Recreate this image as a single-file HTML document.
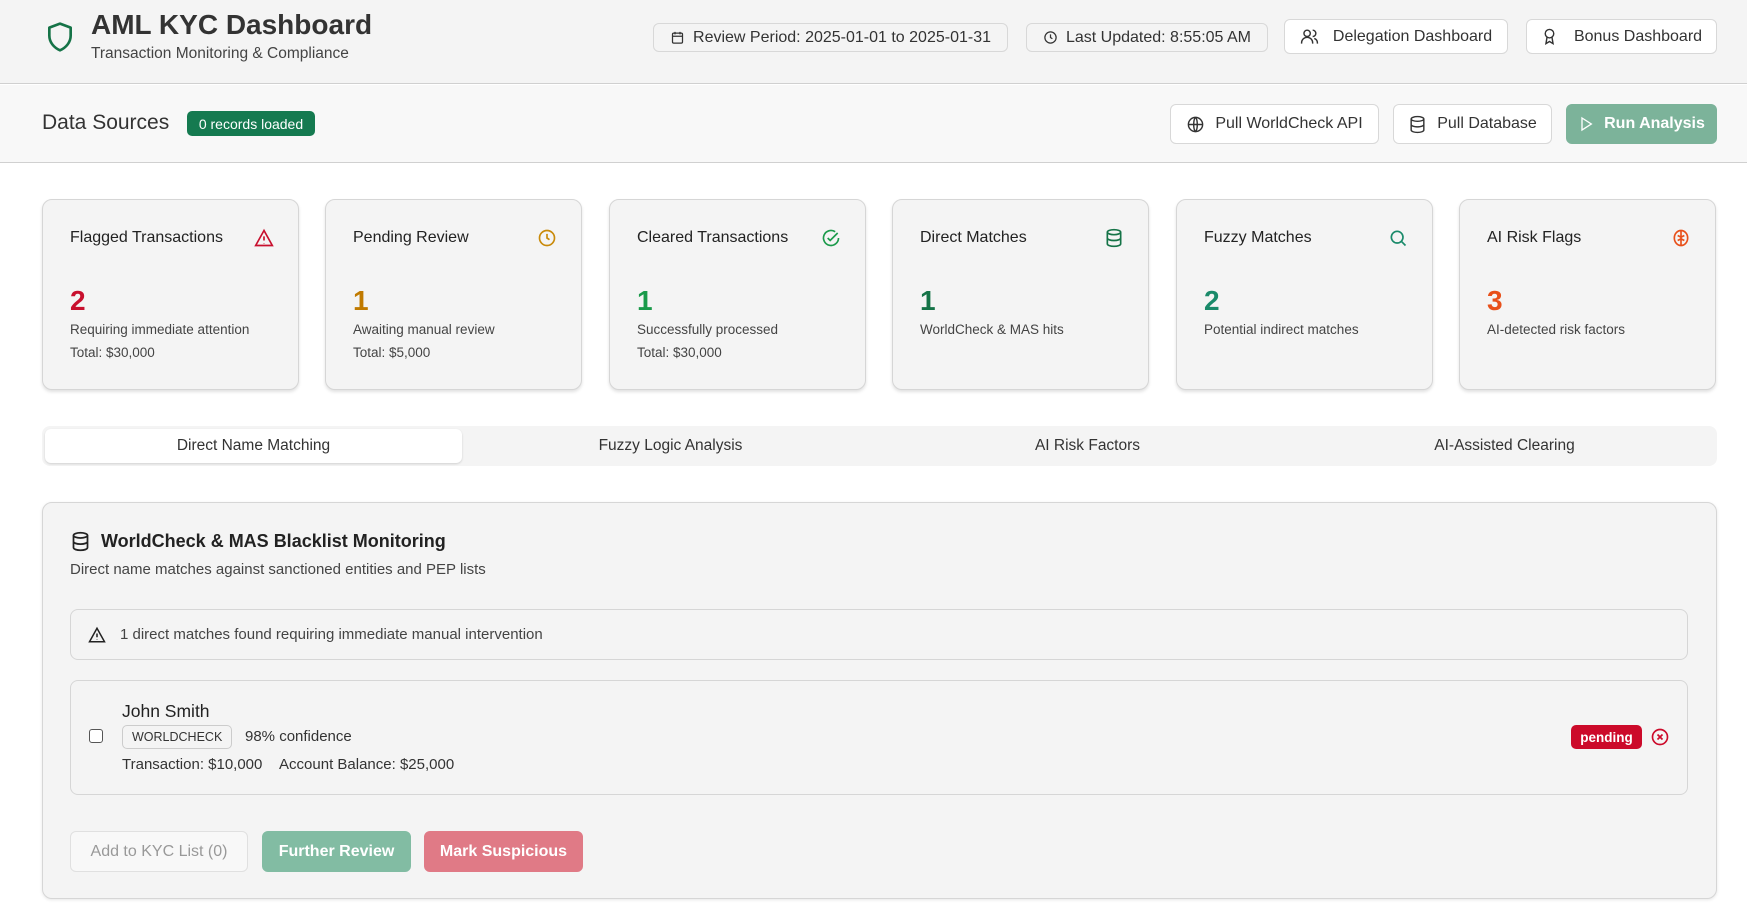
<!DOCTYPE html><html><head><style>
*{box-sizing:border-box;margin:0;padding:0}
body{width:1747px;height:916px;overflow:hidden;background:#fff;font-family:"Liberation Sans",sans-serif;color:#222;position:relative}
.a{position:absolute}
.btn{position:absolute;border:1px solid #d8d8d8;border-radius:6px;background:#fff;display:flex;align-items:center;justify-content:center;gap:10px;font-size:16px;color:#333}
.card{position:absolute;top:199px;width:257px;height:191px;background:#f4f4f4;border:1px solid #d6d6d6;border-radius:10px;box-shadow:0 2px 3px rgba(0,0,0,.12)}
.card .t{position:absolute;left:27px;top:29px;font-size:16px;color:#222}
.card .i{position:absolute;right:24px;top:28px}
.card .n{position:absolute;left:27px;top:85px;font-size:28px;font-weight:bold}
.card .s{position:absolute;left:27px;top:122px;font-size:13.5px;color:#444}
.card .s2{position:absolute;left:27px;top:145px;font-size:13.5px;color:#444}
svg{display:block}
</style></head><body>
<div class="a" style="left:0;top:0;width:1747px;height:84px;background:#f4f4f4;border-bottom:1px solid #d0d0d0"></div>
<svg class="a" style="left:44px;top:19px" width="32" height="36" viewBox="0 0 24 24" fill="none" stroke="#157347" stroke-width="2" stroke-linejoin="round"><path d="M12 2 4 5v6c0 5 3.5 9 8 11 4.5-2 8-6 8-11V5z"/></svg>
<div class="a" style="left:91px;top:9px;font-size:28px;font-weight:bold;color:#333">AML KYC Dashboard</div>
<div class="a" style="left:91px;top:45px;font-size:15.5px;color:#444">Transaction Monitoring &amp; Compliance</div>
<div class="btn" style="left:653px;top:23px;width:355px;height:29px;background:#f4f4f4;font-size:16px;gap:8px"><svg width="15" height="15" viewBox="0 0 24 24" fill="none" stroke="#333" stroke-width="2"><rect x="4" y="5" width="16" height="16" rx="2"/><path d="M8 3v4M16 3v4M4 10h16"/></svg>Review Period: 2025-01-01 to 2025-01-31</div>
<div class="btn" style="left:1026px;top:23px;width:242px;height:29px;background:#f4f4f4;gap:8px"><svg width="15" height="15" viewBox="0 0 24 24" fill="none" stroke="#333" stroke-width="2"><circle cx="12" cy="12" r="9"/><path d="M12 7v5l3 2"/></svg>Last Updated: 8:55:05 AM</div>
<div class="btn" style="left:1284px;top:19px;width:224px;height:35px;gap:14px"><svg width="19" height="19" viewBox="0 0 24 24" fill="none" stroke="#333" stroke-width="1.8"><circle cx="9" cy="8" r="4"/><path d="M2 21v-1a7 7 0 0 1 14 0v1M16 4a4 4 0 0 1 0 8M22 21v-1a6 6 0 0 0-4-5.5"/></svg>Delegation Dashboard</div>
<div class="btn" style="left:1526px;top:19px;width:191px;height:35px;gap:16px"><svg width="17" height="19" viewBox="0 0 24 24" fill="none" stroke="#333" stroke-width="2"><circle cx="12" cy="8" r="6"/><path d="M8.5 13 7 22l5-3 5 3-1.5-9"/></svg>Bonus Dashboard</div>

<div class="a" style="left:0;top:85px;width:1747px;height:78px;background:#f8f8f8;border-bottom:1px solid #d0d0d0"></div>
<div class="a" style="left:42px;top:111px;font-size:21px;color:#333">Data Sources</div>
<div class="a" style="left:187px;top:111px;width:128px;height:25px;background:#157a50;border-radius:5px;color:#fff;font-size:14px;display:flex;align-items:center;justify-content:center">0 records loaded</div>
<div class="btn" style="left:1170px;top:104px;width:209px;height:40px;gap:10px"><svg width="19" height="19" viewBox="0 0 24 24" fill="none" stroke="#333" stroke-width="1.8"><circle cx="12" cy="12" r="9"/><path d="M3 12h18M12 3c3 3 3 15 0 18M12 3c-3 3-3 15 0 18"/></svg>Pull WorldCheck API</div>
<div class="btn" style="left:1393px;top:104px;width:159px;height:40px"><svg width="19" height="19" viewBox="0 0 24 24" fill="none" stroke="#333" stroke-width="1.8"><ellipse cx="12" cy="5" rx="8" ry="3"/><path d="M4 5v14c0 1.7 3.6 3 8 3s8-1.3 8-3V5M4 12c0 1.7 3.6 3 8 3s8-1.3 8-3"/></svg>Pull Database</div>
<div class="btn" style="left:1566px;top:104px;width:151px;height:40px;background:#7cb39a;border-color:#7cb39a;color:#fff;font-weight:bold"><svg width="16" height="16" viewBox="0 0 24 24" fill="none" stroke="#fff" stroke-width="2"><path d="M6 3l14 9-14 9z"/></svg>Run Analysis</div>

<div class="card" style="left:42px"><div class="t">Flagged Transactions</div><div class="i"><svg width="20" height="20" viewBox="0 0 24 24" fill="none" stroke="#c8102e" stroke-width="2"><path d="M12 3 2 21h20z"/><path d="M12 10v5M12 18v.5"/></svg></div><div class="n" style="color:#c8102e">2</div><div class="s">Requiring immediate attention</div><div class="s2">Total: $30,000</div></div>
<div class="card" style="left:325px"><div class="t">Pending Review</div><div class="i"><svg width="20" height="20" viewBox="0 0 24 24" fill="none" stroke="#c98a0a" stroke-width="2"><circle cx="12" cy="12" r="9"/><path d="M12 7v5l3 2"/></svg></div><div class="n" style="color:#c07a00">1</div><div class="s">Awaiting manual review</div><div class="s2">Total: $5,000</div></div>
<div class="card" style="left:609px"><div class="t">Cleared Transactions</div><div class="i"><svg width="20" height="20" viewBox="0 0 24 24" fill="none" stroke="#1a9a4a" stroke-width="2"><path d="M21 12a9 9 0 1 1-4-7.5"/><path d="M8 12l3 3 9-9"/></svg></div><div class="n" style="color:#1a9a4a">1</div><div class="s">Successfully processed</div><div class="s2">Total: $30,000</div></div>
<div class="card" style="left:892px"><div class="t">Direct Matches</div><div class="i"><svg width="20" height="20" viewBox="0 0 24 24" fill="none" stroke="#157347" stroke-width="2"><ellipse cx="12" cy="5" rx="8" ry="3"/><path d="M4 5v14c0 1.7 3.6 3 8 3s8-1.3 8-3V5M4 12c0 1.7 3.6 3 8 3s8-1.3 8-3"/></svg></div><div class="n" style="color:#157347">1</div><div class="s">WorldCheck &amp; MAS hits</div></div>
<div class="card" style="left:1176px"><div class="t">Fuzzy Matches</div><div class="i"><svg width="20" height="20" viewBox="0 0 24 24" fill="none" stroke="#1a8a6a" stroke-width="2"><circle cx="11" cy="11" r="7"/><path d="M16 16l5 5"/></svg></div><div class="n" style="color:#1a8a6a">2</div><div class="s">Potential indirect matches</div></div>
<div class="card" style="left:1459px"><div class="t">AI Risk Flags</div><div class="i"><svg width="20" height="20" viewBox="0 0 24 24" fill="none" stroke="#e8501a" stroke-width="2"><ellipse cx="12" cy="12" rx="8" ry="9"/><path d="M12 3v18M8 9l4 2 4-2M8 15l4-2 4 2"/></svg></div><div class="n" style="color:#e8501a">3</div><div class="s">AI-detected risk factors</div></div>

<div class="a" style="left:42px;top:426px;width:1675px;height:40px;background:#f4f4f4;border-radius:8px"></div>
<div class="a" style="left:45px;top:429px;width:417px;height:34px;background:#fff;border-radius:6px;box-shadow:0 1px 2px rgba(0,0,0,.15)"></div>
<div class="a" style="left:45px;top:437px;width:417px;text-align:center;font-size:15.5px;color:#333">Direct Name Matching</div>
<div class="a" style="left:462px;top:437px;width:417px;text-align:center;font-size:15.5px;color:#333">Fuzzy Logic Analysis</div>
<div class="a" style="left:879px;top:437px;width:417px;text-align:center;font-size:15.5px;color:#333">AI Risk Factors</div>
<div class="a" style="left:1296px;top:437px;width:417px;text-align:center;font-size:15.5px;color:#333">AI-Assisted Clearing</div>

<div class="a" style="left:42px;top:502px;width:1675px;height:397px;background:#f4f4f4;border:1px solid #d6d6d6;border-radius:10px;box-shadow:0 1px 3px rgba(0,0,0,.1)"></div>
<svg class="a" style="left:70px;top:531px" width="21" height="21" viewBox="0 0 24 24" fill="none" stroke="#222" stroke-width="2"><ellipse cx="12" cy="5" rx="8" ry="3"/><path d="M4 5v14c0 1.7 3.6 3 8 3s8-1.3 8-3V5M4 12c0 1.7 3.6 3 8 3s8-1.3 8-3"/></svg>
<div class="a" style="left:101px;top:531px;font-size:18px;font-weight:bold;color:#222">WorldCheck &amp; MAS Blacklist Monitoring</div>
<div class="a" style="left:70px;top:561px;font-size:15px;color:#444">Direct name matches against sanctioned entities and PEP lists</div>
<div class="a" style="left:70px;top:609px;width:1618px;height:51px;border:1px solid #d6d6d6;border-radius:8px"></div>
<svg class="a" style="left:88px;top:626px" width="18" height="18" viewBox="0 0 24 24" fill="none" stroke="#222" stroke-width="2"><path d="M12 3 2 21h20z"/><path d="M12 10v5M12 18v.5"/></svg>
<div class="a" style="left:120px;top:626px;font-size:15px;color:#444">1 direct matches found requiring immediate manual intervention</div>
<div class="a" style="left:70px;top:680px;width:1618px;height:115px;border:1px solid #d6d6d6;border-radius:8px"></div>
<div class="a" style="left:89px;top:729px;width:14px;height:14px;border:1.5px solid #555;border-radius:3px;background:#fff"></div>
<div class="a" style="left:122px;top:701px;font-size:17.5px;color:#222">John Smith</div>
<div class="a" style="left:122px;top:725px;height:24px;padding:0 9px;border:1px solid #ccc;border-radius:5px;font-size:12.5px;display:flex;align-items:center;color:#333">WORLDCHECK</div>
<div class="a" style="left:245px;top:728px;font-size:15px;color:#333">98% confidence</div>
<div class="a" style="left:122px;top:756px;font-size:15px;color:#333">Transaction: $10,000 &nbsp;&nbsp;&nbsp;Account Balance: $25,000</div>
<div class="a" style="left:1571px;top:725px;width:71px;height:24px;background:#cc0a2a;border-radius:5px;color:#fff;font-size:13.5px;font-weight:bold;display:flex;align-items:center;justify-content:center">pending</div>
<svg class="a" style="left:1650px;top:727px" width="20" height="20" viewBox="0 0 24 24" fill="none" stroke="#cc0a2a" stroke-width="2"><circle cx="12" cy="12" r="9"/><path d="M9 9l6 6M15 9l-6 6"/></svg>
<div class="btn" style="left:70px;top:831px;width:178px;height:41px;background:#f8f8f8;color:#999;border-color:#e0e0e0">Add to KYC List (0)</div>
<div class="btn" style="left:262px;top:831px;width:149px;height:41px;background:#82bca3;border-color:#82bca3;color:#fff;font-weight:bold">Further Review</div>
<div class="btn" style="left:424px;top:831px;width:159px;height:41px;background:#e07a86;border-color:#e07a86;color:#fff;font-weight:bold">Mark Suspicious</div>
</body></html>
